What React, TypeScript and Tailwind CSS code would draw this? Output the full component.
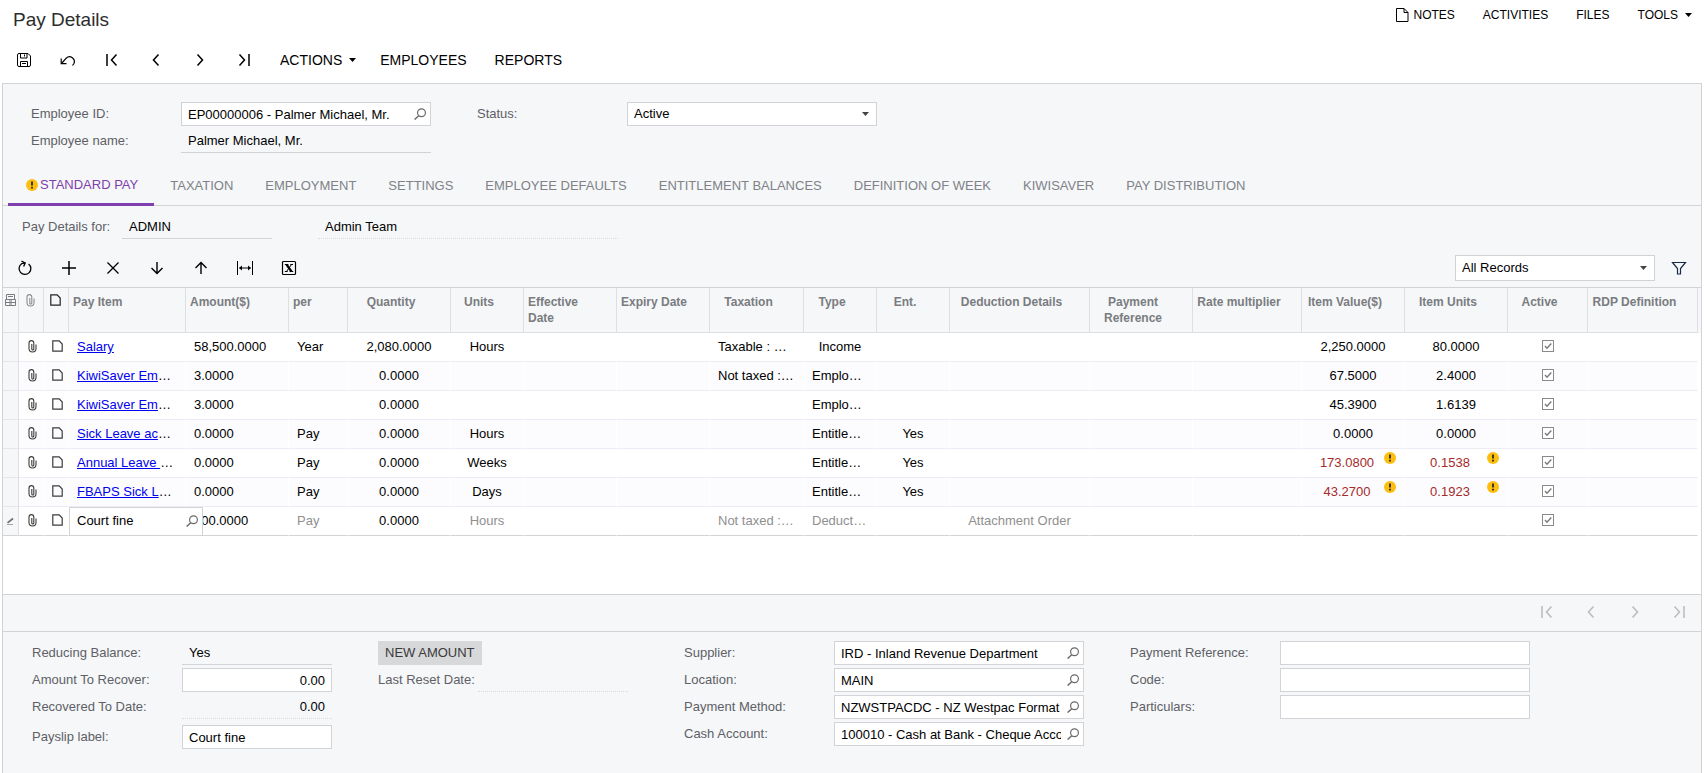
import { useState, type ReactNode } from 'react';

interface PayRow {
  item: string;
  truncated?: boolean;
  amount: string;
  per?: string;
  quantity: string;
  units?: string;
  taxation?: string;
  type: string;
  ent?: string;
  deduction?: string;
  value?: string;
  itemUnits?: string;
  warn?: boolean;
  editing?: boolean;
}

const TABS = [
  'STANDARD PAY',
  'TAXATION',
  'EMPLOYMENT',
  'SETTINGS',
  'EMPLOYEE DEFAULTS',
  'ENTITLEMENT BALANCES',
  'DEFINITION OF WEEK',
  'KIWISAVER',
  'PAY DISTRIBUTION',
];

const COLUMNS = [
  { title: 'Pay Item', width: 'w-[117px]', align: 'text-left' },
  { title: 'Amount($)', width: 'w-[103px]', align: 'text-left' },
  { title: 'per', width: 'w-[59px]', align: 'text-left' },
  { title: 'Quantity', width: 'w-[103px]', align: 'text-center' },
  { title: 'Units', width: 'w-[73px]', align: 'text-center' },
  { title: 'Effective Date', width: 'w-[93px]', align: 'text-left' },
  { title: 'Expiry Date', width: 'w-[93px]', align: 'text-left' },
  { title: 'Taxation', width: 'w-[94px]', align: 'text-center' },
  { title: 'Type', width: 'w-[73px]', align: 'text-center' },
  { title: 'Ent.', width: 'w-[73px]', align: 'text-center' },
  { title: 'Deduction Details', width: 'w-[140px]', align: 'text-center' },
  { title: 'Payment Reference', width: 'w-[103px]', align: 'text-center' },
  { title: 'Rate multiplier', width: 'w-[109px]', align: 'text-center' },
  { title: 'Item Value($)', width: 'w-[103px]', align: 'text-center' },
  { title: 'Item Units', width: 'w-[103px]', align: 'text-center' },
  { title: 'Active', width: 'w-[80px]', align: 'text-center' },
  { title: 'RDP Definition', width: '', align: 'text-center' },
];

const ROWS: PayRow[] = [
  { item: 'Salary', amount: '58,500.0000', per: 'Year', quantity: '2,080.0000', units: 'Hours', taxation: 'Taxable : …', type: 'Income', value: '2,250.0000', itemUnits: '80.0000' },
  { item: 'KiwiSaver Em', truncated: true, amount: '3.0000', quantity: '0.0000', taxation: 'Not taxed :…', type: 'Emplo…', value: '67.5000', itemUnits: '2.4000' },
  { item: 'KiwiSaver Em', truncated: true, amount: '3.0000', quantity: '0.0000', type: 'Emplo…', value: '45.3900', itemUnits: '1.6139' },
  { item: 'Sick Leave ac', truncated: true, amount: '0.0000', per: 'Pay', quantity: '0.0000', units: 'Hours', type: 'Entitle…', ent: 'Yes', value: '0.0000', itemUnits: '0.0000' },
  { item: 'Annual Leave ', truncated: true, amount: '0.0000', per: 'Pay', quantity: '0.0000', units: 'Weeks', type: 'Entitle…', ent: 'Yes', value: '173.0800', itemUnits: '0.1538', warn: true },
  { item: 'FBAPS Sick L', truncated: true, amount: '0.0000', per: 'Pay', quantity: '0.0000', units: 'Days', type: 'Entitle…', ent: 'Yes', value: '43.2700', itemUnits: '0.1923', warn: true },
  { item: 'Court fine', amount: '100.0000', per: 'Pay', quantity: '0.0000', units: 'Hours', taxation: 'Not taxed :…', type: 'Deduct…', deduction: 'Attachment Order', editing: true },
];

/* ── Icons ── */

const Glyph = ({ size = 16, className = '', children }: { size?: number; className?: string; children: ReactNode }) => (
  <svg
    width={size}
    height={size}
    viewBox={`0 0 ${size} ${size}`}
    fill="none"
    stroke="currentColor"
    className={`shrink-0 ${className}`}
    aria-hidden="true"
  >
    {children}
  </svg>
);

const SaveIcon = () => (
  <Glyph>
    <path d="M1.5 3a1.5 1.5 0 0 1 1.500-1.500h9L14.500 4v9a1.500 1.500 0 0 1-1.500 1.500H3A1.500 1.500 0 0 1 1.500 13z" />
    <path d="M4.500 1.500v4.500h6.500V1.500M8.500 2.500v2M4.500 14.500v-5h7v5M6 11.500h4" />
  </Glyph>
);

const UndoIcon = () => (
  <Glyph>
    <path d="M1.500 11.500 6.200 6.200a4.800 4.800 0 0 1 7.600 5.600l-1.300 1.700" strokeWidth="1.200" />
    <path d="M1.200 6.500v5.200h5.300" strokeWidth="1.200" />
  </Glyph>
);

const FirstIcon = () => (
  <Glyph><path d="M3 2v12M12.500 2.500 7.500 8l5 5.500" strokeWidth="1.500" /></Glyph>
);
const PrevIcon = () => (
  <Glyph><path d="M10.500 2.500l-5 5.500 5 5.500" strokeWidth="1.500" /></Glyph>
);
const NextIcon = () => (
  <Glyph><path d="M5.500 2.500l5 5.500-5 5.500" strokeWidth="1.500" /></Glyph>
);
const LastIcon = () => (
  <Glyph><path d="M13 2v12M3.500 2.500l5 5.500-5 5.500" strokeWidth="1.500" /></Glyph>
);

const RefreshIcon = () => (
  <Glyph>
    <path d="M11.600 3.900A5.900 5.900 0 1 1 4.600 3.700L8 3.200" strokeWidth="1.300" />
    <path d="M4.500 1.200 8.200 3 6.600 6.600" strokeWidth="1.300" />
  </Glyph>
);
const PlusIcon = () => (
  <Glyph><path d="M8 1v14M1 8h14" strokeWidth="1.500" /></Glyph>
);
const CrossIcon = () => (
  <Glyph><path d="M2.500 2.500l11 11M13.500 2.500l-11 11" strokeWidth="1.300" /></Glyph>
);
const DownIcon = () => (
  <Glyph><path d="M8 2v11.500M2.500 8 8 13.500 13.500 8" strokeWidth="1.400" /></Glyph>
);
const UpIcon = () => (
  <Glyph><path d="M8 14V2.500M2.500 8 8 2.500 13.500 8" strokeWidth="1.400" /></Glyph>
);
const FitIcon = () => (
  <Glyph>
    <path d="M.5 1v14M15.500 1v14M2.500 8h11" />
    <path d="M2 8l3-2.500v5zM14 8l-3-2.500v5z" fill="currentColor" stroke="none" />
  </Glyph>
);
const ExcelIcon = () => (
  <Glyph>
    <rect x="1.500" y="1.500" width="13" height="13" rx="1" strokeWidth="1.200" />
    <path d="M5.500 4.500l5 7" strokeWidth="2.200" />
    <path d="M10.500 4.500l-5 7M3.800 4.500h3.600M9.300 4.500h2.700M3.800 11.500h2.900M8.600 11.500h3.600" />
  </Glyph>
);
const FunnelIcon = () => (
  <Glyph className="text-[#15294a]">
    <path d="M1.500 2.500h13L9.500 8.500v5.500h-3V8.500z" strokeWidth="1.200" />
  </Glyph>
);

const ClipIcon = ({ className = '' }: { className?: string }) => (
  <svg width="9" height="13" viewBox="0 0 9 13" fill="none" stroke="currentColor" strokeWidth="1.100" className={className} aria-hidden="true">
    <path d="M1 9V3a2.400 2.400 0 0 1 4.800 0v6a1 1 0 0 1-2 0V4M1 8.500a3.500 3.500 0 0 0 7 0V4.500" />
  </svg>
);
const DocIcon = () => (
  <svg width="11" height="12" viewBox="0 0 11 12" fill="none" stroke="currentColor" strokeWidth="1.200" aria-hidden="true">
    <path d="M.8.800h6.400L10.200 4v7.200H.8z" />
  </svg>
);
const PageIcon = () => (
  <svg width="13" height="14" viewBox="0 0 13 14" fill="none" stroke="currentColor" aria-hidden="true">
    <path d="M.5.5h7.500l4 4v9H.5zM8 .5v4h4" />
  </svg>
);
const FilesIcon = () => (
  <svg width="11" height="12" viewBox="0 0 11 12" fill="none" stroke="currentColor" aria-hidden="true">
    <path d="M1.500 5V.5h8V5M.5 5.500h10v6H.5zM3 2.500h5M.5 8.500h10M4 7h3M4 10h3" />
  </svg>
);
const PencilIcon = () => (
  <svg width="9" height="9" viewBox="0 0 9 9" fill="none" stroke="currentColor" className="text-[#6b6b6b]" aria-hidden="true">
    <path d="M1.500 5.800 7 1.500" strokeWidth="1.600" />
    <path d="M1 7.500h6" strokeWidth=".6" />
  </svg>
);
const Magnifier = () => (
  <Glyph size={12} className="text-[#6a6a6a]">
    <circle cx="7.500" cy="4.700" r="3.900" strokeWidth="1.200" />
    <path d="M4.700 7.700.6 11.600" strokeWidth="1.400" />
  </Glyph>
);
const Caret = ({ className = '' }: { className?: string }) => (
  <svg width="7" height="4" viewBox="0 0 7 4" fill="currentColor" className={className} aria-hidden="true">
    <path d="M0 0h7L3.500 4z" />
  </svg>
);
const WarningIcon = ({ className = '' }: { className?: string }) => (
  <svg width="12" height="12" viewBox="0 0 12 12" className={`shrink-0 ${className}`} aria-label="Warning">
    <circle cx="6" cy="6" r="6" fill="#fdbf0f" />
    <path d="M6 2.500v4M6 7.800v1.600" stroke="#2b2b2b" strokeWidth="1.800" />
  </svg>
);

/* ── Form pieces ── */

const IconButton = ({ label, disabled, children }: { label: string; disabled?: boolean; children: ReactNode }) => (
  <button type="button" aria-label={label} disabled={disabled} className="flex h-8 w-11 items-center justify-center disabled:text-[#b9bbbf]">
    {children}
  </button>
);

interface FieldProps {
  id: string;
  label: string;
  value?: string;
  width?: string;
  labelWidth?: string;
  variant?: 'box' | 'line' | 'dotted';
  lookup?: boolean;
  numeric?: boolean;
}

const VARIANTS = {
  box: 'border border-[#d2d3d6] bg-white px-[6px]',
  line: 'border-b border-[#d2d3d6] px-[7px]',
  dotted: 'border-b border-dotted border-[#d9dadd] px-[7px]',
};

const Field = ({
  id,
  label,
  value = '',
  width = 'w-[250px]',
  labelWidth = 'w-[150px]',
  variant = 'box',
  lookup,
  numeric,
}: FieldProps) => (
  <div className="flex h-6 items-center">
    <label htmlFor={id} className={`shrink-0 whitespace-nowrap text-[#5f6065] ${labelWidth}`}>{label}</label>
    <div className={`flex h-6 items-center ${width} ${VARIANTS[variant]}`}>
      <input
        id={id}
        type="text"
        defaultValue={value}
        readOnly={variant !== 'box'}
        className={`h-full min-w-0 flex-1 bg-transparent outline-none ${numeric ? 'text-right' : ''}`}
      />
      {lookup && (
        <button type="button" aria-label={`Look up ${label}`} className="-mr-0.5 ml-1.5">
          <Magnifier />
        </button>
      )}
    </div>
  </div>
);

const CheckBox = ({ label }: { label: string }) => (
  <span className="relative mx-auto mb-0.5 flex size-3">
    <input type="checkbox" defaultChecked aria-label={label} className="peer size-3 appearance-none border border-[#8a8a8a] bg-white" />
    <svg viewBox="0 0 12 12" fill="none" stroke="#7a7a7a" strokeWidth="1.400" className="pointer-events-none absolute inset-0 hidden peer-checked:block">
      <path d="M3 6l2 2.200L9.300 3.500" />
    </svg>
  </span>
);

const WarnCell = ({ text, warn }: { text?: string; warn?: boolean }) =>
  warn ? (
    <div className="flex h-7 text-[#a52a2a]">
      <span className="flex-1 self-center text-center">{text}</span>
      <WarningIcon className="mt-[3px]" />
    </div>
  ) : (
    <>{text}</>
  );

/* ── Grid ── */

const CELL = 'border-r border-b border-r-white px-2 whitespace-nowrap';

const PayGridRow = ({ row, index }: { row: PayRow; index: number }) => {
  const line = row.editing ? 'border-b-[#d2d3d6]' : 'border-b-[#efebf5]';
  const cell = `${CELL} ${line}`;
  const iconCell = `border-r border-b border-r-white pb-0.5 text-[#3c3c3c] ${line}`;
  const dim = row.editing ? 'text-[#8f8f8f]' : '';
  // text cut off by the column width starts at the left edge
  const clipped = (text?: string) => (text?.endsWith('…') ? 'text-left' : 'text-center');

  return (
    <tr className={`h-[29px] ${index % 2 ? 'bg-[#fcfcfe]' : 'bg-white'}`}>
      <td className={`border-r border-b border-r-[#dddfe4] bg-[#f5f7f9] pl-[3px] ${row.editing ? 'border-b-[#d2d3d6]' : 'border-b-[#e4e6ea]'}`}>
        {row.editing && <PencilIcon />}
      </td>
      <td className={`pl-[9px] ${iconCell}`}><ClipIcon /></td>
      <td className={`pl-2 ${iconCell}`}><DocIcon /></td>
      <td className={`relative ${cell}`}>
        {row.editing ? (
          <div className="absolute top-0 left-0 z-10 flex h-[29px] w-[134px] items-center border border-[#d2d3d6] bg-white pr-1 pb-px pl-[7px]">
            <input type="text" aria-label="Pay Item" defaultValue={row.item} className="min-w-0 flex-1 outline-none" />
            <button type="button" aria-label="Look up pay item"><Magnifier /></button>
          </div>
        ) : (
          <>
            <a href="#" className="whitespace-pre text-[#0000ee] underline">{row.item}</a>
            {row.truncated && '…'}
          </>
        )}
      </td>
      <td className={cell}>{row.amount}</td>
      <td className={`${cell} ${dim}`}>{row.per}</td>
      <td className={`${cell} text-center`}>{row.quantity}</td>
      <td className={`${cell} text-center ${dim}`}>{row.units}</td>
      <td className={cell} />
      <td className={cell} />
      <td className={`${cell} ${dim}`}>{row.taxation}</td>
      <td className={`${cell} ${clipped(row.type)} ${dim}`}>{row.type}</td>
      <td className={`${cell} text-center`}>{row.ent}</td>
      <td className={`${cell} text-center ${dim}`}>{row.deduction}</td>
      <td className={cell} />
      <td className={cell} />
      <td className={`${cell} text-center`}><WarnCell text={row.value} warn={row.warn} /></td>
      <td className={`${cell} text-center`}><WarnCell text={row.itemUnits} warn={row.warn} /></td>
      <td className={cell}><CheckBox label={`${row.item} active`} /></td>
      <td className={cell} />
    </tr>
  );
};

const HEAD = 'border-r border-b border-[#dddfe4] pt-1.5 align-top';

const PayGrid = () => (
  <div className="overflow-x-auto border-t border-[#d2d3d6] bg-white pb-[58px]">
    <div className="bg-[linear-gradient(#f5f7f9_45px,transparent_45px)] pr-[3px]">
      <table className="w-full min-w-[1695px] table-fixed border-separate border-spacing-0">
        <thead>
          <tr className="h-[45px] bg-[#f5f7f9] text-xs leading-4 text-[#7a7c80]">
            <th className={`w-4 pl-0.5 ${HEAD}`}><FilesIcon /></th>
            <th className={`w-[25px] pl-[7px] ${HEAD}`}><ClipIcon className="text-[#8f8f8f]" /></th>
            <th className={`w-[25px] pl-1.5 text-[#222] ${HEAD}`}><DocIcon /></th>
            {COLUMNS.map((col) => (
              <th key={col.title} className={`pr-5 pl-1 ${HEAD} ${col.width} ${col.align}`}>{col.title}</th>
            ))}
          </tr>
        </thead>
        <tbody>
          {ROWS.map((row, idx) => (
            <PayGridRow key={idx} row={row} index={idx} />
          ))}
        </tbody>
      </table>
    </div>
  </div>
);

export default function App() {
  const [activeTab, setActiveTab] = useState(0);

  return (
    <div className="flex min-h-screen flex-col bg-white font-['Liberation_Sans',Arial,sans-serif] text-[13px] leading-4 text-black">
      {/* ── Title ── */}
      <header className="flex h-10 items-start justify-between pr-3 pl-[13px]">
        <h1 className="pt-2 text-[19px] leading-6 text-[#2d2d2d]">Pay Details</h1>
        <nav className="flex gap-7 pt-[7px] text-xs leading-4">
          <button type="button" className="flex items-center gap-1"><PageIcon />NOTES</button>
          <button type="button">ACTIVITIES</button>
          <button type="button">FILES</button>
          <button type="button" className="flex items-center gap-[7px]">TOOLS<Caret /></button>
        </nav>
      </header>

      {/* ── Main toolbar ── */}
      <div className="flex h-[43px] items-center pb-[3px] pl-0.5 text-sm">
        <IconButton label="Save"><SaveIcon /></IconButton>
        <IconButton label="Undo"><UndoIcon /></IconButton>
        <IconButton label="First"><FirstIcon /></IconButton>
        <IconButton label="Previous"><PrevIcon /></IconButton>
        <IconButton label="Next"><NextIcon /></IconButton>
        <IconButton label="Last"><LastIcon /></IconButton>
        <div className="flex pl-3.5">
          <button type="button" className="flex items-center gap-[7px] pr-6">ACTIONS<Caret /></button>
          <button type="button" className="pr-7">EMPLOYEES</button>
          <button type="button">REPORTS</button>
        </div>
      </div>

      <main className="mx-0.5 flex-1 border border-b-0 border-[#d2d3d6] bg-[#f5f7f9]">
        {/* ── Employee summary ── */}
        <section className="flex gap-[46px] pt-[18px] pl-7">
          <div className="flex flex-col gap-[3px]">
            <Field id="employee-id" label="Employee ID:" value="EP00000006 - Palmer Michael, Mr." lookup />
            <Field id="employee-name" label="Employee name:" value="Palmer Michael, Mr." variant="line" />
          </div>
          <div className="flex h-6 items-center">
            <label htmlFor="status" className="w-[150px] text-[#5f6065]">Status:</label>
            <div className="relative">
              <select id="status" className="h-6 w-[250px] appearance-none border border-[#d2d3d6] bg-white px-[6px]">
                <option>Active</option>
              </select>
              <Caret className="pointer-events-none absolute top-[10px] right-2 text-[#444]" />
            </div>
          </div>
        </section>

        {/* ── Tabs ── */}
        <div role="tablist" className="flex h-[53px] items-end border-b border-[#d2d3d6] pl-[5px]">
          {TABS.map((tab, idx) => (
            <button
              key={tab}
              type="button"
              role="tab"
              aria-selected={idx === activeTab}
              onClick={() => setActiveTab(idx)}
              className={`-mb-px flex h-10 items-center gap-0.5 whitespace-nowrap ${idx === 0 ? 'pr-4 pl-[18px]' : 'px-4'} ${
                idx === activeTab ? 'border-b-[3px] border-[#7f3fad] text-[#7f3fad]' : 'text-[#808287]'
              }`}
            >
              {idx === 0 && <WarningIcon />}
              {tab}
            </button>
          ))}
        </div>

        <section className="flex gap-[46px] pt-[9px] pl-[19px]">
          <Field id="pay-details-for" label="Pay Details for:" value="ADMIN" width="w-[150px]" labelWidth="w-[100px]" variant="line" />
          <input
            type="text"
            aria-label="Team"
            readOnly
            defaultValue="Admin Team"
            className="h-6 w-[300px] border-b border-dotted border-[#d9dadd] bg-transparent px-[7px] outline-none"
          />
        </section>

        {/* ── Grid toolbar ── */}
        <div className="flex h-12 items-center pt-[10px]">
          <IconButton label="Refresh"><RefreshIcon /></IconButton>
          <IconButton label="Add row"><PlusIcon /></IconButton>
          <IconButton label="Delete row"><CrossIcon /></IconButton>
          <IconButton label="Move down"><DownIcon /></IconButton>
          <IconButton label="Move up"><UpIcon /></IconButton>
          <IconButton label="Fit to screen"><FitIcon /></IconButton>
          <IconButton label="Export to Excel"><ExcelIcon /></IconButton>
          <div className="relative mr-0.5 ml-auto">
            <select aria-label="Records filter" className="h-[26px] w-[200px] appearance-none border border-[#d2d3d6] bg-white px-[6px]">
              <option>All Records</option>
            </select>
            <Caret className="pointer-events-none absolute top-[11px] right-2 text-[#444]" />
          </div>
          <IconButton label="Filter settings"><FunnelIcon /></IconButton>
        </div>

        <PayGrid />

        {/* ── Pager ── */}
        <div className="flex h-[38px] items-center justify-end border-y border-[#d2d3d6] pb-0.5">
          <IconButton label="First page" disabled><FirstIcon /></IconButton>
          <IconButton label="Previous page" disabled><PrevIcon /></IconButton>
          <IconButton label="Next page" disabled><NextIcon /></IconButton>
          <IconButton label="Last page" disabled><LastIcon /></IconButton>
        </div>

        {/* ── Row details ── */}
        <section className="flex items-start gap-[46px] pt-[9px] pb-6 pl-[29px]">
          <div className="flex flex-col gap-1.5">
            <div className="flex flex-col gap-[3px]">
              <Field id="reducing-balance" label="Reducing Balance:" value="Yes" width="w-[150px]" variant="line" />
              <Field id="amount-to-recover" label="Amount To Recover:" value="0.00" width="w-[150px]" numeric />
              <Field id="recovered-to-date" label="Recovered To Date:" value="0.00" width="w-[150px]" variant="dotted" numeric />
            </div>
            <Field id="payslip-label" label="Payslip label:" value="Court fine" width="w-[150px]" />
          </div>
          <div className="mr-2.5 flex flex-col items-start gap-[3px]">
            <button type="button" className="h-6 bg-[#d7d8da] px-[7px] text-[#3a3a3a]">NEW AMOUNT</button>
            <Field id="last-reset-date" label="Last Reset Date:" width="w-[150px]" labelWidth="w-[100px]" variant="dotted" />
          </div>
          <div className="flex flex-col gap-[3px]">
            <Field id="supplier" label="Supplier:" value="IRD - Inland Revenue Department" lookup />
            <Field id="location" label="Location:" value="MAIN" lookup />
            <Field id="payment-method" label="Payment Method:" value="NZWSTPACDC - NZ Westpac Format" lookup />
            <Field id="cash-account" label="Cash Account:" value="100010 - Cash at Bank - Cheque Account" lookup />
          </div>
          <div className="flex flex-col gap-[3px]">
            <Field id="payment-reference" label="Payment Reference:" />
            <Field id="code" label="Code:" />
            <Field id="particulars" label="Particulars:" />
          </div>
        </section>
      </main>
    </div>
  );
}
